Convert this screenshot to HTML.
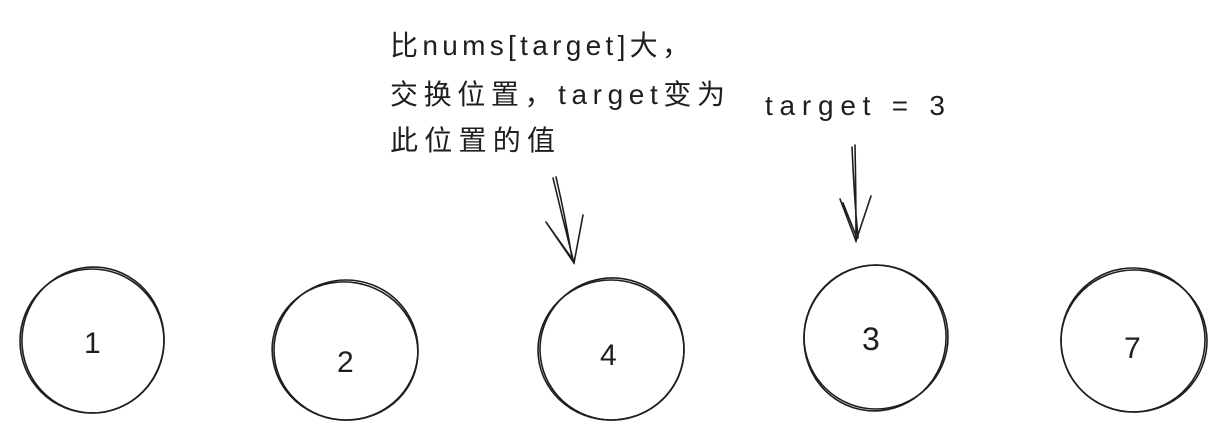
<!DOCTYPE html>
<html><head><meta charset="utf-8"><style>
html,body{margin:0;padding:0;background:#fff;width:1225px;height:445px;overflow:hidden}
svg{display:block}
text{font-family:"Liberation Sans","Noto Sans CJK SC",sans-serif;fill:#1e1e1e}
</style></head><body>
<svg width="1225" height="445" viewBox="0 0 1225 445">
<g fill="none" stroke="#1e1e1e" stroke-width="1.6" stroke-linecap="round">
<ellipse cx="92" cy="341" rx="72" ry="72"/>
<ellipse cx="93" cy="340" rx="71" ry="73" transform="rotate(8 93 340)"/>
<ellipse cx="346" cy="350" rx="72" ry="70"/>
<ellipse cx="345" cy="351" rx="73" ry="69" transform="rotate(10 345 351)"/>
<ellipse cx="611" cy="350" rx="73" ry="70"/>
<ellipse cx="612" cy="349" rx="72" ry="71" transform="rotate(-8 612 349)"/>
<ellipse cx="876" cy="337" rx="72" ry="72"/>
<ellipse cx="875" cy="338" rx="71" ry="73" transform="rotate(12 875 338)"/>
<ellipse cx="1134" cy="341" rx="73" ry="71"/>
<ellipse cx="1133" cy="340" rx="72" ry="72" transform="rotate(-10 1133 340)"/>
<path d="M553 178 Q563 220 574 263 M556 177 Q566 220 572 258"/>
<path d="M546 222 L574 263 L583 215 M548 225 L573 260"/>
<path d="M855 145 Q856 195 856 241 M852 147 Q854 195 858 238"/>
<path d="M840 199 L856 241 L871 196 M843 203 L857 238"/>
</g>
<text x="390" y="55" font-size="28" textLength="300" lengthAdjust="spacing">比nums[target]大，</text>
<text x="390" y="104" font-size="28" textLength="335" lengthAdjust="spacing">交换位置，target变为</text>
<text x="390" y="150" font-size="28" textLength="165" lengthAdjust="spacing">此位置的值</text>
<text x="765" y="115" font-size="28" textLength="180" lengthAdjust="spacing">target = 3</text>
<text x="84" y="353" font-size="30">1</text>
<text x="337" y="372" font-size="30">2</text>
<text x="600" y="365" font-size="30">4</text>
<text x="862" y="350" font-size="32">3</text>
<text x="1124" y="358" font-size="30">7</text>
</svg>
</body></html>
